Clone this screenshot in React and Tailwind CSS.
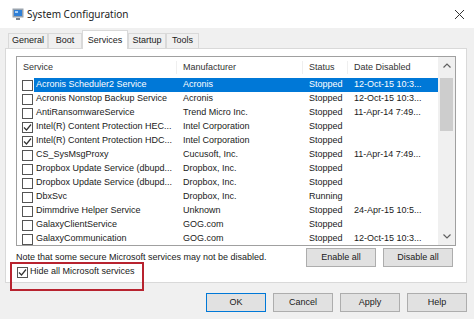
import React from 'react';

const rows = [
  { name: 'Acronis Scheduler2 Service', maker: 'Acronis', status: 'Stopped', date: '12-Oct-15 10:3...', selected: true },
  { name: 'Acronis Nonstop Backup Service', maker: 'Acronis', status: 'Stopped', date: '12-Oct-15 10:3...' },
  { name: 'AntiRansomwareService', maker: 'Trend Micro Inc.', status: 'Stopped', date: '11-Apr-14 7:49...' },
  { name: 'Intel(R) Content Protection HEC...', maker: 'Intel Corporation', status: 'Stopped', date: '', checked: true },
  { name: 'Intel(R) Content Protection HDC...', maker: 'Intel Corporation', status: 'Stopped', date: '', checked: true },
  { name: 'CS_SysMsgProxy', maker: 'Cucusoft, Inc.', status: 'Stopped', date: '11-Apr-14 7:49...' },
  { name: 'Dropbox Update Service (dbupd...', maker: 'Dropbox, Inc.', status: 'Stopped', date: '' },
  { name: 'Dropbox Update Service (dbupd...', maker: 'Dropbox, Inc.', status: 'Stopped', date: '' },
  { name: 'DbxSvc', maker: 'Dropbox, Inc.', status: 'Running', date: '' },
  { name: 'Dimmdrive Helper Service', maker: 'Unknown', status: 'Stopped', date: '24-Apr-15 10:5...' },
  { name: 'GalaxyClientService', maker: 'GOG.com', status: 'Stopped', date: '' },
  { name: 'GalaxyCommunication', maker: 'GOG.com', status: 'Stopped', date: '12-Oct-15 10:3...' },
];

const Check = ({ checked }) => (
  <div className="w-[11px] h-[11px] border border-[#555] bg-white flex items-center justify-center">
    {checked && (
      <svg width="9" height="9" viewBox="0 0 9 9">
        <path d="M1 4.5 L3.5 7 L8 1.5" fill="none" stroke="#333" strokeWidth="1.2" />
      </svg>
    )}
  </div>
);

const Button = ({ children, primary }) => (
  <div
    className={`w-[60px] h-[19px] flex items-center justify-center bg-[#e1e1e1] border ${
      primary ? 'border-[#0078d7]' : 'border-[#adadad]'
    }`}
  >
    {children}
  </div>
);

const Tab = ({ label, active, w }) =>
  active ? (
    <div className={`${w} h-[19px] -mb-px bg-white border border-b-0 border-[#d9d9d9] flex justify-center pt-[3px] relative z-10`}>
      {label}
    </div>
  ) : (
    <div className={`${w} h-[15px] bg-[#f0f0f0] border border-b-0 border-[#d9d9d9] flex items-center justify-center`}>
      {label}
    </div>
  );

export default function App() {
  return (
    <div
      className="relative w-[474px] h-[319px] overflow-hidden bg-[#f0f0f0] text-[9px] text-[#1a1a1a]"
      style={{ fontFamily: '"Liberation Sans", Arial, sans-serif' }}
    >
      {/* Title bar */}
      <div className="h-[28px] bg-white flex items-center pl-[12px] pr-[9px]">
        <svg width="12" height="12" viewBox="0 0 12 12">
          <rect x="0.5" y="0.5" width="11" height="9" fill="#9aa3ad" />
          <rect x="2" y="2" width="8" height="6" fill="#2f7fd6" />
          <rect x="3" y="3" width="3" height="2" fill="#a9d0f5" />
          <rect x="4" y="10" width="4" height="2" fill="#7a828c" />
        </svg>
        <span
          className="ml-[3px] text-[10px] text-[#222] flex-1"
          style={{ fontFamily: '"Noto Sans", sans-serif' }}
        >
          System Configuration
        </span>
        <svg width="11" height="11" viewBox="0 0 11 11">
          <path d="M1 1 L10 10 M10 1 L1 10" stroke="#333" strokeWidth="1" />
        </svg>
      </div>

      {/* Tabs */}
      <div className="h-[20px] flex items-end pl-[8px]">
        <Tab label="General" w="w-[40px]" />
        <Tab label="Boot" w="w-[34px]" />
        <Tab label="Services" w="w-[46px]" active />
        <Tab label="Startup" w="w-[38px]" />
        <Tab label="Tools" w="w-[33px]" />
      </div>

      {/* Panel */}
      <div className="ml-[5px] w-[462px] h-[235px] bg-white border border-[#d9d9d9] pl-[10px] pt-[7px]">
        <div className="w-[440px] h-[190px] border border-[#a0a0a0] flex overflow-hidden">
          <div className="w-[421px]">
            {/* Header */}
            <div className="h-[21px] flex items-center text-[#333]">
              <div className="w-[160px] pl-[6px] border-r border-[#efefef]">Service</div>
              <div className="w-[126px] pl-[6px] border-r border-[#efefef]">Manufacturer</div>
              <div className="w-[45px] pl-[6px] border-r border-[#efefef]">Status</div>
              <div className="flex-1 pl-[6px]">Date Disabled</div>
            </div>
            {rows.map((r, i) => (
              <div key={i} className="h-[14px] flex items-center">
                <div className="w-[17px] pl-[5px] flex items-center">
                  <Check checked={r.checked} />
                </div>
                <div
                  className={`flex-1 h-full flex items-center whitespace-nowrap ${
                    r.selected ? 'bg-[#0078d7] text-white' : ''
                  }`}
                >
                  <div className="w-[143px] pl-[2px] overflow-hidden">{r.name}</div>
                  <div className="w-[126px] pl-[6px] overflow-hidden">{r.maker}</div>
                  <div className="w-[45px] pl-[6px]">{r.status}</div>
                  <div className="flex-1 pl-[6px]">{r.date}</div>
                </div>
              </div>
            ))}
          </div>
          {/* Scrollbar */}
          <div className="w-[17px] bg-[#f0f0f0] flex flex-col items-center">
            <div className="h-[17px] flex items-center justify-center">
              <svg width="8" height="5" viewBox="0 0 8 5">
                <path d="M0.5 4.5 L4 1 L7.5 4.5" fill="none" stroke="#606060" strokeWidth="1.2" />
              </svg>
            </div>
            <div className="mt-[4px] w-[13px] h-[53px] bg-[#cdcdcd]" />
            <div className="flex-1" />
            <div className="h-[17px] flex items-center justify-center">
              <svg width="8" height="5" viewBox="0 0 8 5">
                <path d="M0.5 0.5 L4 4 L7.5 0.5" fill="none" stroke="#606060" strokeWidth="1.2" />
              </svg>
            </div>
          </div>
        </div>

        <div className="w-[440px] mt-[2px] flex items-center">
          <div className="flex-1">Note that some secure Microsoft services may not be disabled.</div>
          <div className="flex gap-[7px] mr-[3px]">
            <div className="w-[70px] h-[19px] flex items-center justify-center bg-[#e1e1e1] border border-[#adadad]">Enable all</div>
            <div className="w-[70px] h-[19px] flex items-center justify-center bg-[#e1e1e1] border border-[#adadad]">Disable all</div>
          </div>
        </div>

        <div className="-mt-[2px] ml-[1px] flex items-center gap-[2px] h-[14px]">
          <Check checked />
          <span>Hide all Microsoft services</span>
        </div>
      </div>

      {/* Bottom buttons */}
      <div className="mt-[10px] flex justify-end gap-[7px] pr-[7px]">
        <Button primary>OK</Button>
        <Button>Cancel</Button>
        <Button>Apply</Button>
        <Button>Help</Button>
      </div>

      {/* Red highlight annotation */}
      <div className="absolute left-[10px] top-[262px] w-[134px] h-[29px] border-2 border-[#b8232f]" />
    </div>
  );
}
